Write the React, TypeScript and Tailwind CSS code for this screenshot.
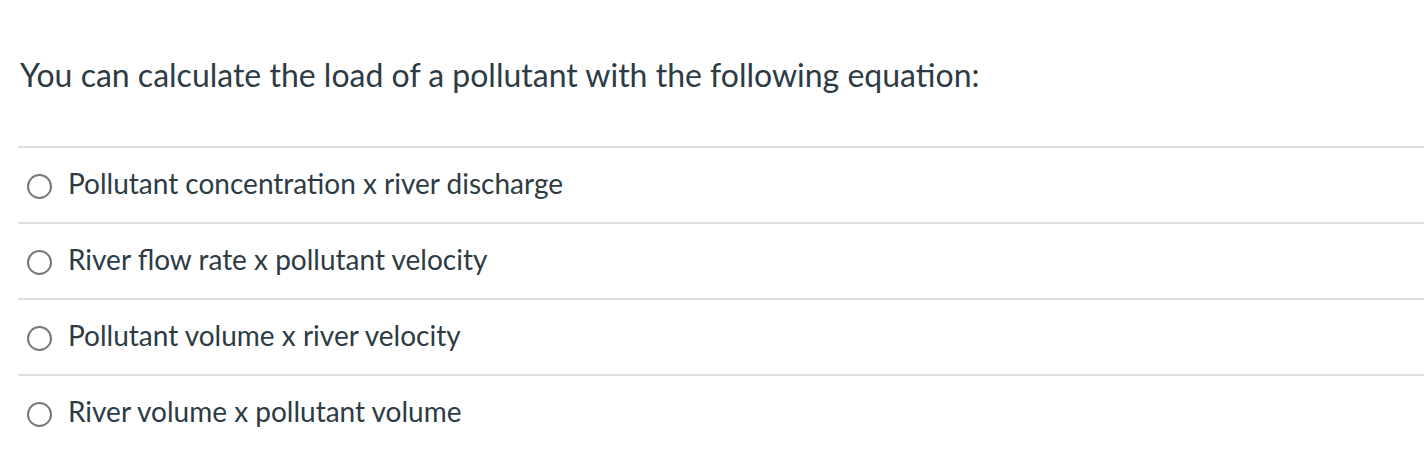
const options = [
  'Pollutant concentration x river discharge',
  'River flow rate x pollutant velocity',
  'Pollutant volume x river velocity',
  'River volume x pollutant volume',
];

export default function App() {
  return (
    <div className="w-[1424px] h-[462px] bg-white text-[#2d3b45] font-['Lato','Liberation_Sans',sans-serif] overflow-hidden">
      <div className="pl-[18px] pt-[56px]">
        <h2 className="pl-[2px] text-[32px] leading-[38px] font-normal">
          You can calculate the load of a pollutant with the following equation:
        </h2>
        <div className="mt-[52px]">
          {options.map((opt) => (
            <label key={opt} className="flex items-center gap-[16px] h-[76px] border-t-2 border-[#dddddd] pl-[9px]">
              <span className="w-[25px] h-[25px] rounded-full border-2 border-[#777777] bg-white shrink-0 mt-[2px]" />
              <span className="text-[28px] leading-[32px] mb-[4px]">{opt}</span>
            </label>
          ))}
        </div>
      </div>
    </div>
  );
}
